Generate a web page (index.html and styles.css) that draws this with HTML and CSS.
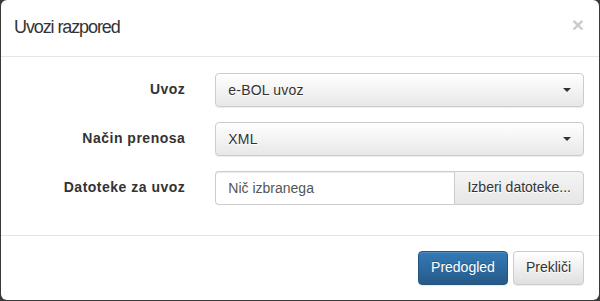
FILE: index.html
```html
<!DOCTYPE html>
<html>
<head>
<meta charset="utf-8">
<link rel="stylesheet" href="styles.css">
</head>
<body>
<div class="modal">
  <div class="modal-header">
    <h4 class="modal-title">Uvozi razpored</h4>
    <button class="close" type="button">×</button>
  </div>
  <div class="modal-body">
    <div class="form-group">
      <label class="control-label">Uvoz</label>
      <div class="control">
        <button class="select" type="button"><span>e-BOL uvoz</span><span class="caret"></span></button>
      </div>
    </div>
    <div class="form-group">
      <label class="control-label">Način prenosa</label>
      <div class="control">
        <button class="select" type="button"><span>XML</span><span class="caret"></span></button>
      </div>
    </div>
    <div class="form-group">
      <label class="control-label">Datoteke za uvoz</label>
      <div class="control">
        <div class="input-group">
          <input class="form-control" type="text" placeholder="Nič izbranega">
          <button class="btn btn-default group-btn" type="button">Izberi datoteke...</button>
        </div>
      </div>
    </div>
  </div>
  <div class="modal-footer">
    <button class="btn btn-primary" type="button">Predogled</button>
    <button class="btn btn-default" type="button">Prekliči</button>
  </div>
</div>
</body>
</html>
```
FILE: styles.css
```css
* { box-sizing: border-box; }
html, body { margin: 0; padding: 0; }
body {
  background: #3a3a3a;
  font-family: "Liberation Sans", Arial, sans-serif;
  font-size: 14px;
  line-height: 1.42857;
  color: #333;
  width: 600px;
  height: 301px;
  overflow: hidden;
}
.modal {
  margin: 0 1px;
  width: 598px;
  height: 300px;
  background: #fff;
  border-radius: 6px;
  display: flex;
  flex-direction: column;
}
.modal-header {
  display: flex;
  align-items: flex-start;
  justify-content: space-between;
  padding: 15px 15px 15px 13px;
  border-bottom: 1px solid #e5e5e5;
}
.modal-title {
  margin: 0;
  font-size: 18px;
  font-weight: 500;
  line-height: 1.42857;
  letter-spacing: -1.1px;
}
.close {
  background: none;
  border: 0;
  padding: 0;
  margin-top: -1px;
  font-family: "Liberation Sans", Arial, sans-serif;
  font-size: 21px;
  font-weight: bold;
  line-height: 1;
  color: #000;
  text-shadow: 0 1px 0 #fff;
  opacity: .2;
}
.modal-body {
  padding: 16px 15px 0 15px;
  flex: 1;
}
.form-group {
  display: flex;
  margin: 0 -15px 15px -15px;
}
.control-label {
  width: 33.3333%;
  padding: 7px 15px 0 15px;
  text-align: right;
  font-weight: bold;
  letter-spacing: 0.5px;
}
.control {
  width: 66.6667%;
  padding: 0 15px;
}
.select {
  width: 100%;
  height: 34px;
  display: flex;
  align-items: center;
  justify-content: space-between;
  padding: 6px 12px;
  font-family: inherit;
  font-size: 14px;
  letter-spacing: 0.2px;
  color: #333;
  text-shadow: 0 1px 0 #fff;
  background: linear-gradient(to bottom, #fff 0, #e8e8e8 100%);
  border: 1px solid #ccc;
  border-radius: 4px;
  box-shadow: inset 0 1px 0 rgba(255,255,255,.15), 0 1px 1px rgba(0,0,0,.075);
}
.caret {
  width: 0;
  height: 0;
  border-top: 4px solid #333;
  border-left: 4px solid transparent;
  border-right: 4px solid transparent;
}
.input-group {
  display: flex;
}
.form-control {
  flex: 1;
  min-width: 0;
  height: 34px;
  padding: 6px 12px;
  font-family: inherit;
  font-size: 14px;
  color: #555;
  background: #fff;
  border: 1px solid #ccc;
  border-right: 0;
  border-radius: 4px 0 0 4px;
  box-shadow: inset 0 1px 1px rgba(0,0,0,.075);
}
.form-control::placeholder { color: #555; }
.btn {
  height: 34px;
  padding: 6px 12px;
  font-family: inherit;
  font-size: 14px;
  line-height: 1.42857;
  border: 1px solid transparent;
  border-radius: 4px;
}
.btn-default {
  color: #333;
  text-shadow: 0 1px 0 #fff;
  background: linear-gradient(to bottom, #fff 0, #e0e0e0 100%);
  border-color: #ccc;
  box-shadow: inset 0 1px 0 rgba(255,255,255,.15), 0 1px 1px rgba(0,0,0,.075);
}
.group-btn {
  border-radius: 0 4px 4px 0;
  background: linear-gradient(to bottom, #f4f4f4 0, #e6e6e6 100%);
  box-shadow: none;
}
.btn-primary {
  color: #fff;
  text-shadow: 0 -1px 0 rgba(0,0,0,.2);
  background: linear-gradient(to bottom, #337ab7 0, #265a88 100%);
  border-color: #245580;
  box-shadow: inset 0 1px 0 rgba(255,255,255,.15), 0 1px 1px rgba(0,0,0,.075);
}
.modal-footer {
  display: flex;
  justify-content: flex-end;
  gap: 5px;
  padding: 15px;
  border-top: 1px solid #e5e5e5;
}
```
